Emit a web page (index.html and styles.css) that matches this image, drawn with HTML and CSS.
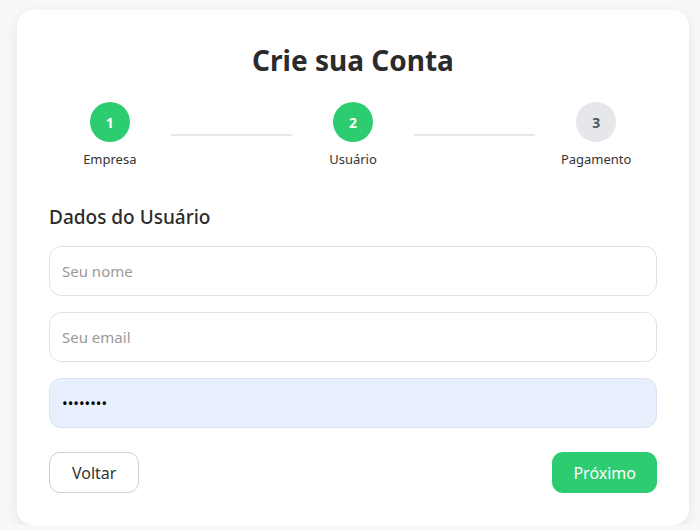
FILE: index.html
```html
<!DOCTYPE html>
<html lang="pt-BR">
<head>
<meta charset="utf-8">
<title>Crie sua Conta</title>
<link rel="stylesheet" href="styles.css">
</head>
<body>
<div class="card">
  <h1 class="title">Crie sua Conta</h1>
  <div class="steps">
    <div class="step">
      <div class="circle done">1</div>
      <div class="label">Empresa</div>
    </div>
    <div class="line"></div>
    <div class="step">
      <div class="circle done">2</div>
      <div class="label">Usuário</div>
    </div>
    <div class="line"></div>
    <div class="step">
      <div class="circle">3</div>
      <div class="label">Pagamento</div>
    </div>
  </div>
  <h2 class="section">Dados do Usuário</h2>
  <form class="form">
    <input class="field" type="text" placeholder="Seu nome">
    <input class="field" type="email" placeholder="Seu email">
    <input class="field filled" type="password" value="12345678">
    <div class="actions">
      <button type="button" class="btn back">Voltar</button>
      <button type="button" class="btn next">Próximo</button>
    </div>
  </form>
</div>
</body>
</html>
```

FILE: styles.css
```css
* { box-sizing: border-box; }
body {
  margin: 0;
  padding: 10px 11px 0 17px;
  background: #f8f8f8;
  font-family: "Noto Sans", "Open Sans", sans-serif;
  color: #333;
}
.card {
  background: #fff;
  border-radius: 16px;
  padding: 32px;
  box-shadow: 0 4px 14px rgba(0,0,0,0.08);
}
.title {
  margin: 0 0 24px;
  text-align: center;
  font-size: 28px;
  line-height: 36px;
  font-weight: 700;
  color: #2b2b2b;
}
.steps {
  display: flex;
  align-items: center;
}
.step, .line { flex: 1; }
.step {
  display: flex;
  flex-direction: column;
  align-items: center;
  gap: 8px;
}
.circle {
  width: 40px;
  height: 40px;
  border-radius: 50%;
  background: #e5e7eb;
  color: #4b5563;
  display: flex;
  align-items: center;
  justify-content: center;
  font-weight: 700;
  font-size: 14px;
}
.circle.done { background: #2ecc71; color: #fff; }
.label { font-size: 13px; line-height: 18px; color: #333; }
.line { height: 2px; background: #e5e7eb; }
.section {
  margin: 36px 0 16px;
  font-size: 19px;
  line-height: 26px;
  font-weight: 500;
  color: #2b2b2b;
}
.form { display: flex; flex-direction: column; gap: 16px; }
.field {
  height: 50px;
  border: 1px solid #e2e2e2;
  border-radius: 12px;
  padding: 0 12px;
  font-family: inherit;
  font-size: 15px;
  color: #000;
  background: #fff;
  outline: none;
}
.field::placeholder { color: #9a9a9a; }
.field.filled { background: #e8f0fe; border-color: #dde3ee; }
.actions {
  display: flex;
  justify-content: space-between;
  margin-top: 8px;
}
.btn {
  height: 41px;
  border-radius: 11px;
  font-family: inherit;
  font-size: 16px;
  padding: 0 22px;
  cursor: pointer;
}
.back { background: #fff; border: 1px solid #cfcfd6; color: #333; padding: 0 22px; }
.next { background: #2ecc71; border: none; color: #fff; padding: 0 21px; }
```
